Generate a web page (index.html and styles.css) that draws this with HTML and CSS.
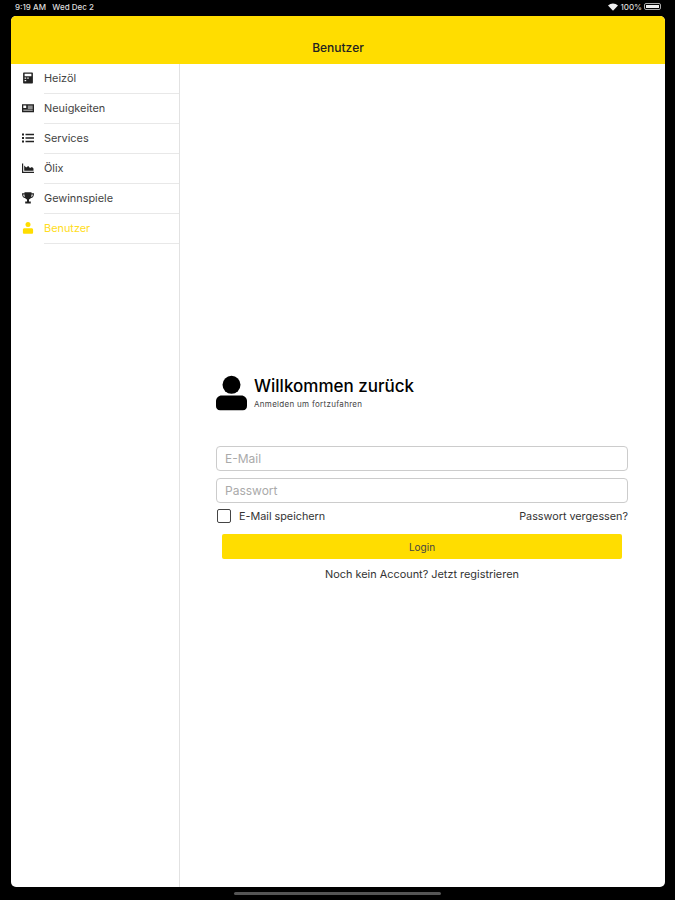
FILE: index.html
```html
<!DOCTYPE html>
<html lang="de">
  <head>
    <meta charset="UTF-8" />
    <meta name="viewport" content="width=device-width, initial-scale=1.0" />
    <title>Benutzer</title>
    <link rel="stylesheet" href="styles.css">
  </head>
  <body>
    <div class="statusbar">
      <span>9:19 AM&nbsp;&nbsp;&nbsp;Wed Dec 2</span>
      <div class="status-right">
        <svg class="wifi" viewBox="0 0 12 9"><path d="M0 2.800C3.400-.6 8.600-.6 12 2.800L6 9z" /></svg>
        <span>100%</span>
        <div class="battery"><div class="battery-fill"></div></div>
      </div>
    </div>

    <div class="screen">
      <header class="topbar">Benutzer</header>
      <div class="content">
        <nav class="sidebar">
          <a class="nav-item">
            <svg viewBox="0 0 12 12"><path fill-rule="evenodd" d="M1.800 .5h8.400a.7.7 0 0 1 .7.7v9.600a.7.7 0 0 1-.7.7H1.800a.7.7 0 0 1-.7-.7V1.200a.7.7 0 0 1 .7-.7zM2.600 1.800v2.400h6.800V1.800zM2.600 5.600v1.200h1.600V5.600zM5.300 5.600v1.200h1.400V5.600zM2.600 8v1.300h1.600V8z" /></svg>
            <span>Heizöl</span>
          </a>
          <a class="nav-item">
            <svg viewBox="0 0 12 12"><path fill-rule="evenodd" d="M0 2.200h12v8H0zM1.300 3.500v2.600h2.900V3.500zM5.800 3.800v.8h4.900v-.8zM5.800 5.600v.8h4.900v-.8zM1.300 7.800v.8h9.400v-.8z" /></svg>
            <span>Neuigkeiten</span>
          </a>
          <a class="nav-item">
            <svg viewBox="0 0 12 12"><path d="M0 1.500h2v2H0zM3.500 1.800H12v1.400H3.500zM0 5h2v2H0zM3.500 5.300H12v1.400H3.500zM0 8.500h2v2H0zM3.500 8.800H12v1.400H3.500z" /></svg>
            <span>Services</span>
          </a>
          <a class="nav-item">
            <svg viewBox="0 0 12 12"><path d="M0 1.500h1.200v8.300H12V11H0zM2.200 8.800V3.600l2 2 2-1.500 1.800 2 2-1 1.500 1.500v2.200z" /></svg>
            <span>Ölix</span>
          </a>
          <a class="nav-item">
            <svg viewBox="0 0 12 12"><path fill-rule="evenodd" d="M2.500 .2h7V1.300H12c0 3-1 4.500-3.300 5-.5.700-1.100 1.100-1.700 1.300v2H8.800V11.500H3.200V9.600H5v-2c-.6-.2-1.200-.6-1.700-1.300C1 5.800 0 4.300 0 1.300H2.500zM1.200 2.500c.1 1.300.5 2.200 1.500 2.700-.1-.8-.2-1.800-.2-2.700zM10.800 2.500H9.500c0 .9-.1 1.900-.2 2.700 1-.5 1.400-1.400 1.500-2.700z" /></svg>
            <span>Gewinnspiele</span>
          </a>
          <a class="nav-item active">
            <svg viewBox="0 0 12 12"><circle cx="6" cy="2.600" r="2.500" /><path d="M2.500 6.200h7c1 0 1.600.6 1.600 1.600v2.600c0 .8-.5 1.300-1.300 1.300H2.200c-.8 0-1.300-.5-1.300-1.300V7.800c0-1 .6-1.600 1.600-1.600z" /></svg>
            <span>Benutzer</span>
          </a>
        </nav>

        <main class="main">
          <div class="login">
            <div class="welcome">
              <svg class="welcome-icon" viewBox="0 0 32 36"><circle cx="16" cy="9.500" r="9.300" /><path d="M6 20.500h20c3.500 0 6 2.500 6 6v5c0 2.800-1.500 4.300-4.200 4.300H4.200C1.500 35.800 0 34.300 0 31.500v-5c0-3.500 2.500-6 6-6z" /></svg>
              <div>
                <h1>Willkommen zurück</h1>
                <p>Anmelden um fortzufahren</p>
              </div>
            </div>

            <input class="field" type="text" placeholder="E-Mail" />
            <input class="field" type="password" placeholder="Passwort" />

            <div class="options">
              <label class="remember">
                <span class="checkbox"></span>
                E-Mail speichern
              </label>
              <a class="forgot">Passwort vergessen?</a>
            </div>

            <button class="login-btn">Login</button>
            <p class="register">Noch kein Account? Jetzt registrieren</p>
          </div>
        </main>
      </div>
    </div>

    <div class="home-bar"></div>
  </body>
</html>
```

FILE: styles.css
```css
* {
  box-sizing: border-box;
}
html,
body {
  height: 100%;
}
body {
  margin: 0;
  background-color: #000;
  font-family: "Inter", "Liberation Sans", sans-serif;
  color: #222;
  overflow: hidden;
}

.statusbar {
  height: 16px;
  padding: 0 14px 3px 15px;
  display: flex;
  justify-content: space-between;
  align-items: center;
  color: #ddd;
  font-size: 8px;
  font-weight: 500;
}
.status-right {
  display: flex;
  align-items: center;
  gap: 2px;
}
.wifi {
  width: 10px;
  height: 8px;
  fill: #eee;
}
.battery {
  width: 17px;
  height: 7px;
  padding: 1px;
  border: 1px solid #aaa;
  border-radius: 2px;
}
.battery-fill {
  height: 100%;
  background-color: #eee;
}

.screen {
  height: 871px;
  margin: 0 10px 0 11px;
  background-color: #fff;
  border-radius: 5px;
  overflow: hidden;
  display: flex;
  flex-direction: column;
}
.topbar {
  height: 48px;
  flex-shrink: 0;
  padding-bottom: 9px;
  background-color: #ffdd00;
  display: flex;
  align-items: flex-end;
  justify-content: center;
  font-size: 12px;
  font-weight: 500;
  color: #222;
}
.content {
  flex: 1;
  display: flex;
}

.sidebar {
  width: 169px;
  border-right: 1px solid #e2e2e2;
}
.nav-item {
  height: 30px;
  padding: 0 0 2px 11px;
  display: flex;
  align-items: center;
  font-size: 10.900px;
  color: #444;
  position: relative;
}
.nav-item svg {
  width: 12px;
  height: 12px;
  margin-right: 10px;
  fill: #222;
  flex-shrink: 0;
}
.nav-item::after {
  content: "";
  position: absolute;
  left: 33px;
  right: 0;
  bottom: 0;
  border-bottom: 1px solid #e8e8e8;
}
.nav-item.active {
  color: #ffdd22;
}
.nav-item.active svg {
  fill: #ffdd00;
}

.main {
  flex: 1;
  padding: 311px 37px 0 36px;
}
.welcome {
  display: flex;
  align-items: flex-start;
  gap: 7px;
  margin-bottom: 35px;
}
.welcome-icon {
  width: 31px;
  height: 36px;
  fill: #000;
}
h1 {
  margin: 0;
  font-size: 17px;
  line-height: 22px;
  font-weight: 500;
  color: #000;
}
.welcome p {
  margin: 3px 0 0;
  font-size: 8px;
  letter-spacing: .3px;
  line-height: 9px;
  color: #444;
}

.field {
  display: block;
  width: 100%;
  height: 25px;
  margin-bottom: 7px;
  padding: 0 8px;
  border: 1px solid #ccc;
  border-radius: 4px;
  font-family: inherit;
  font-size: 12px;
  outline: none;
}
.field::placeholder {
  color: #aaa;
}

.options {
  display: flex;
  justify-content: space-between;
  align-items: center;
  margin-top: -2px;
  height: 16px;
  font-size: 10.800px;
  color: #333;
}
.remember {
  display: flex;
  align-items: center;
  gap: 8px;
  padding-left: 1px;
}
.checkbox {
  width: 14px;
  height: 14px;
  border: 1.500px solid #444;
  border-radius: 2px;
}

.login-btn {
  display: block;
  width: 400px;
  height: 25px;
  margin: 10px 0 0 6px;
  border: none;
  border-radius: 2px;
  background-color: #ffdd00;
  font-family: inherit;
  font-size: 10px;
  color: #444;
}
.register {
  margin: 8px 0 0;
  text-align: center;
  font-size: 10.900px;
  line-height: 14px;
  color: #333;
}

.home-bar {
  width: 207px;
  height: 3px;
  margin: 5px 0 0 234px;
  border-radius: 2px;
  background-color: #555;
}
```
